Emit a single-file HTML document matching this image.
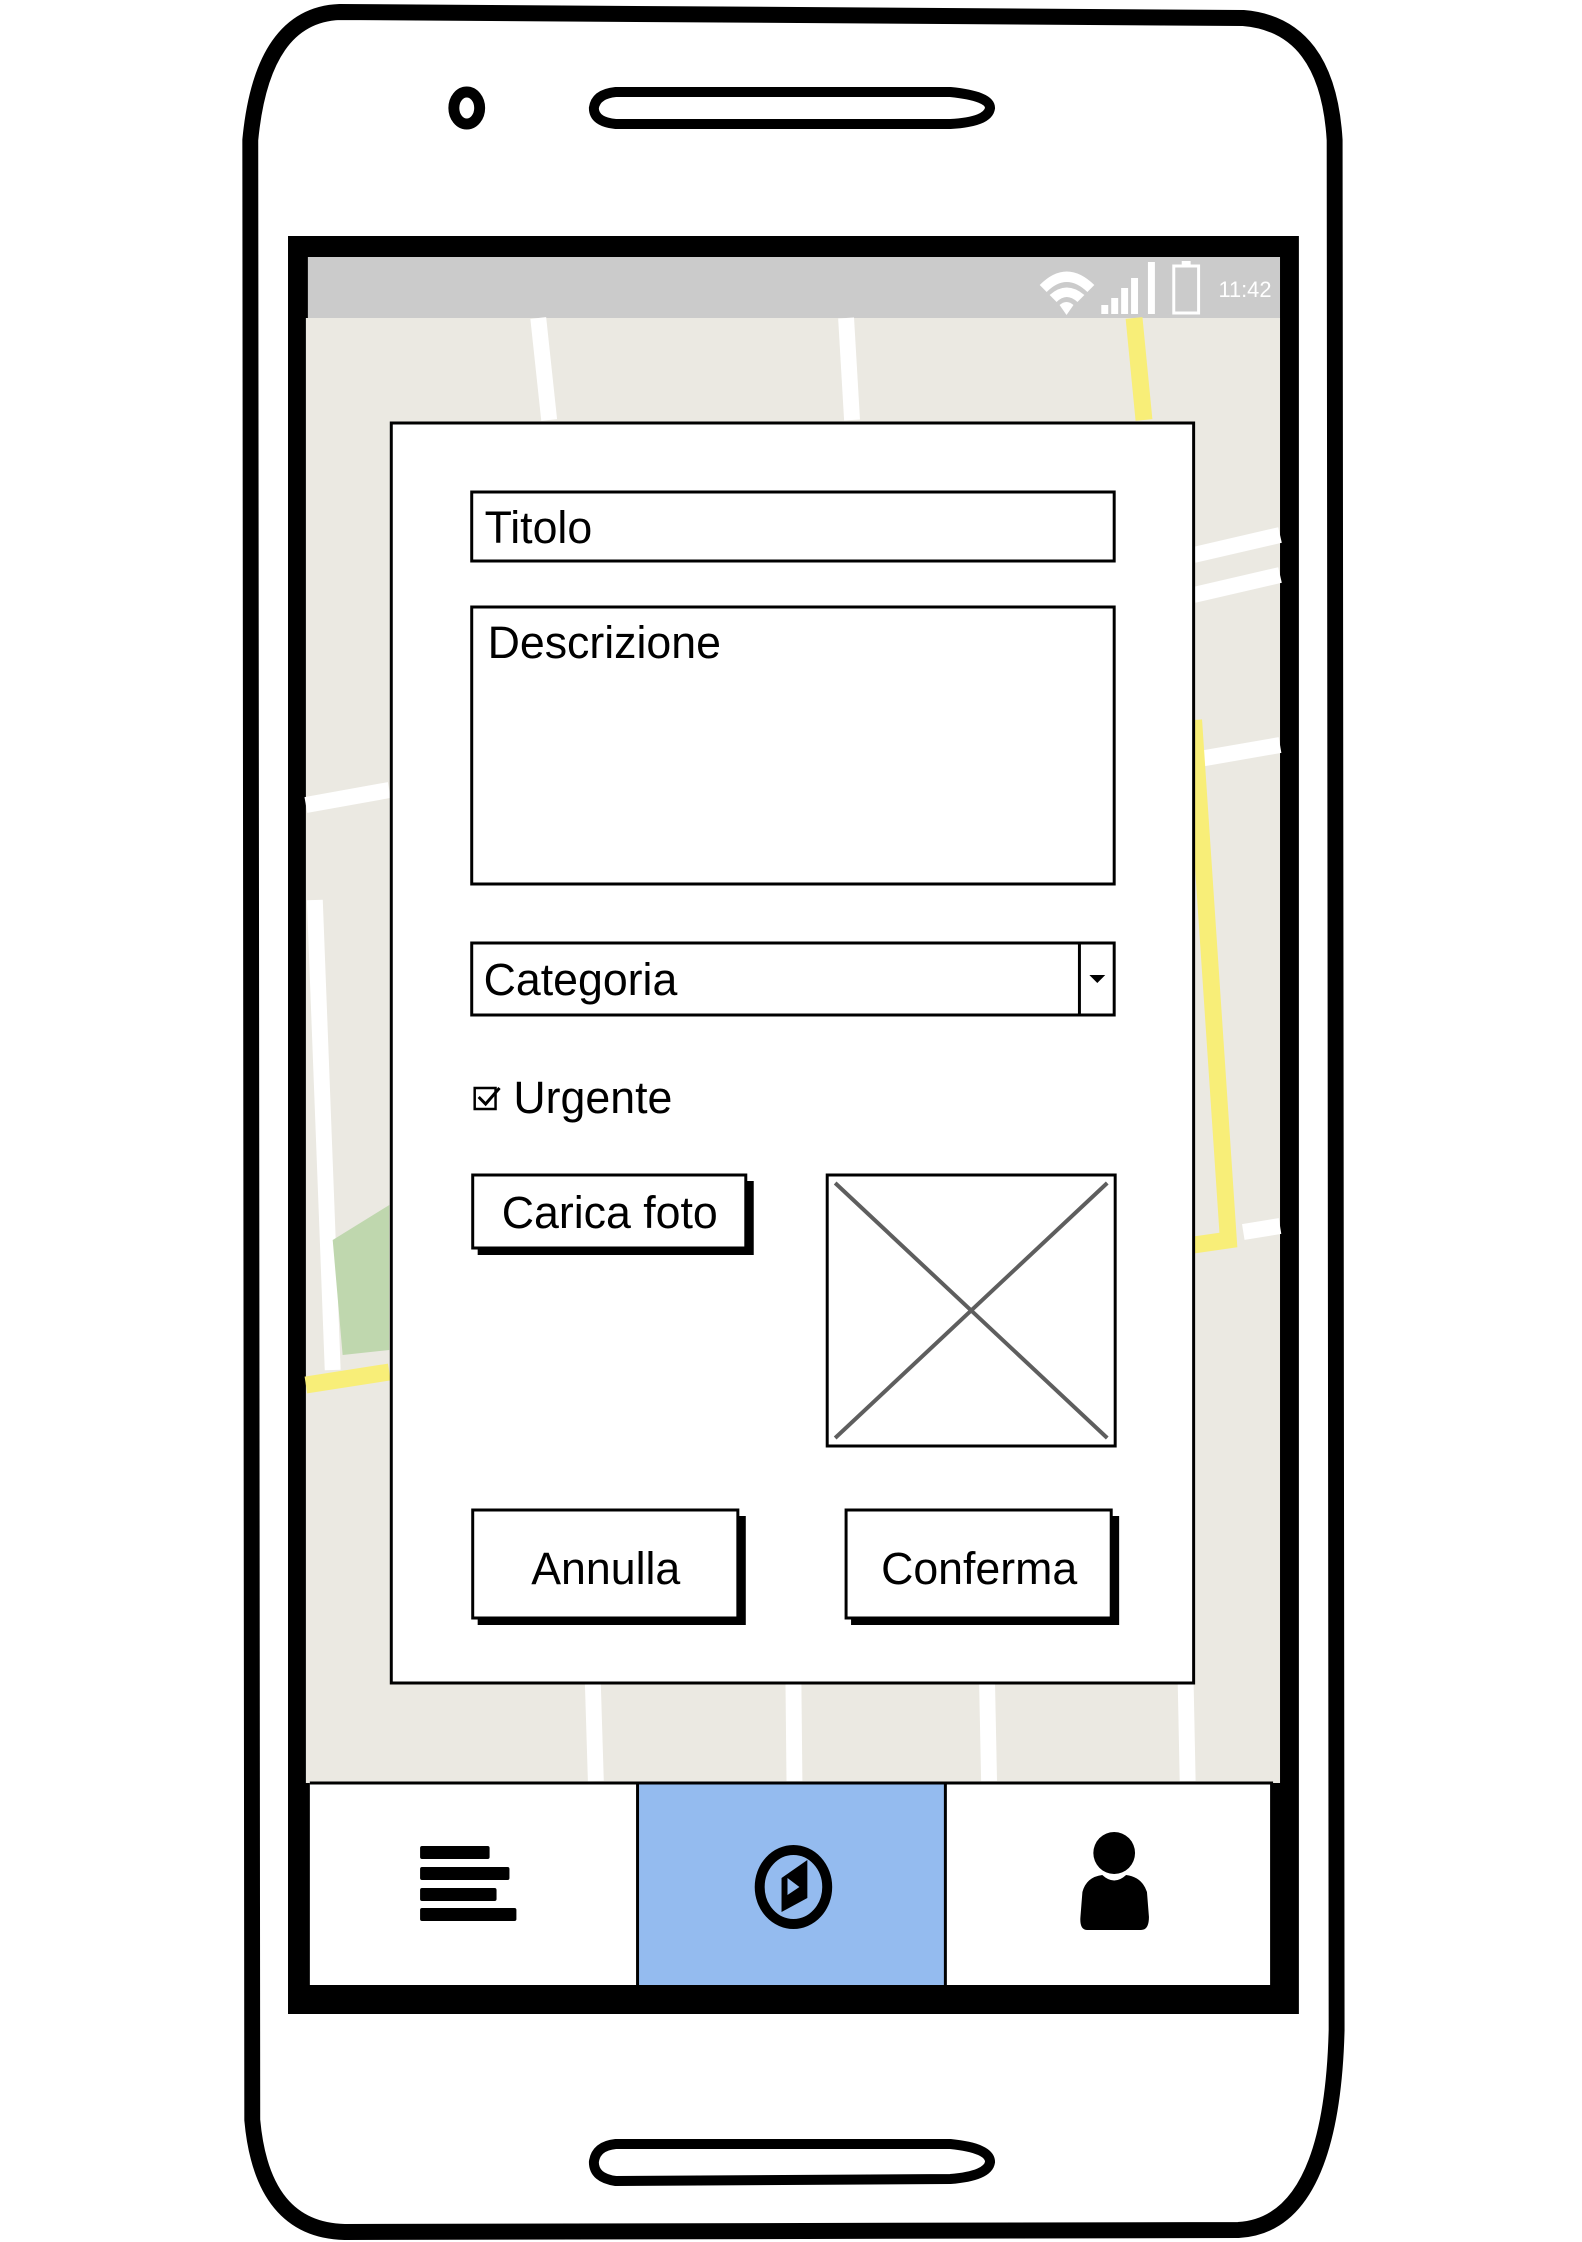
<!DOCTYPE html>
<html><head><meta charset="utf-8"><style>
html,body{margin:0;padding:0;background:#fff;width:1582px;height:2242px;overflow:hidden}
svg{position:absolute;left:0;top:0}
text{font-family:"Liberation Sans",sans-serif;fill:#000}
</style></head><body>
<svg width="1582" height="2242" viewBox="0 0 1582 2242">
<g transform="translate(290,0) scale(0.993,1) translate(-290,0)">
<path d="M340 12 L1250 18 Q1335 25 1342 140 L1344 2030 Q1339 2225 1245 2230 L345 2232 Q262 2230 252 2120 L250 140 Q262 15 340 12 Z" fill="#fff" stroke="#000" stroke-width="16"/>
<ellipse cx="468" cy="108" rx="13" ry="16" fill="none" stroke="#000" stroke-width="11"/>
<path d="M618 92 L955 92 Q995 96 995 108 Q993 122 955 124 L618 124 Q596 122 596 108 Q598 94 618 92 Z" fill="none" stroke="#000" stroke-width="10"/>
<path d="M618 2144 L955 2144 Q995 2148 995 2162 Q993 2176 955 2179 L618 2181 Q596 2178 596 2162 Q598 2146 618 2144 Z" fill="none" stroke="#000" stroke-width="10"/>
<rect x="288" y="236" width="1018" height="1778" fill="#000"/>
<rect x="308" y="257" width="979" height="61" fill="#cbcbcb"/>
<rect x="306" y="318" width="981" height="1465" fill="#ebe9e2"/>
<g stroke="#fff" stroke-width="16" fill="none">
<path d="M540 318 L551 420"/>
<path d="M850 318 L856 420"/>
<path d="M1200 555 L1287 535"/>
<path d="M1200 595 L1287 575"/>
<path d="M1200 760 L1287 745"/>
<path d="M306 805 L390 790"/>
<path d="M315 900 L333 1370"/>
<path d="M1250 1232 L1287 1226"/>
<path d="M595 1684 L598 1781"/>
<path d="M797 1684 L798 1781"/>
<path d="M992 1684 L994 1781"/>
<path d="M1192 1684 L1194 1781"/>
</g>
<path d="M333 1240 L390 1205 L390 1350 L343 1355 Z" fill="#bfd7ae"/>
<g stroke="#f8ee78" stroke-width="17" fill="none">
<path d="M1140 318 L1150 420"/>
<path d="M1200 720 L1235 1240 L1200 1245"/>
<path d="M306 1385 L390 1372"/>
</g>
<g fill="#fff">
<path d="M1045 285 Q1072 258 1100 285 L1093 292 Q1072 272 1052 292 Z"/>
<path d="M1055 295 Q1072 280 1090 295 L1083 302 Q1072 292 1062 302 Z"/>
<path d="M1065 305 Q1072 299 1079 305 L1072 315 Z"/>
<rect x="1107" y="305" width="7" height="9"/><rect x="1117" y="298" width="7" height="16"/><rect x="1127" y="288" width="7" height="26"/><rect x="1137" y="278" width="7" height="36"/><rect x="1154" y="262" width="7" height="52"/>
</g>
<rect x="1180" y="266" width="25" height="47" fill="none" stroke="#fff" stroke-width="3"/>
<rect x="1188" y="261" width="9" height="5" fill="#fff"/>
<text x="1225" y="297" font-size="22" style="fill:#fff">11:42</text>
<rect x="392" y="423" width="808" height="1260" fill="#fff" stroke="#000" stroke-width="3"/>
<rect x="473" y="492" width="647" height="69" fill="#fff" stroke="#000" stroke-width="3"/>
<text x="486" y="543" font-size="45">Titolo</text>
<rect x="473" y="607" width="647" height="277" fill="#fff" stroke="#000" stroke-width="3"/>
<text x="489" y="658" font-size="45">Descrizione</text>
<rect x="473" y="943" width="647" height="72" fill="#fff" stroke="#000" stroke-width="3"/>
<line x1="1085" y1="943" x2="1085" y2="1015" stroke="#000" stroke-width="3"/>
<path d="M1095 975 L1111 975 L1103 983 Z" fill="#000"/>
<text x="485" y="995" font-size="45">Categoria</text>
<rect x="476" y="1088" width="21" height="21" fill="none" stroke="#000" stroke-width="2.5"/>
<path d="M480 1097 L487 1104 L501 1088" fill="none" stroke="#000" stroke-width="3"/>
<text x="515" y="1113" font-size="45">Urgente</text>
<rect x="479" y="1181" width="278" height="74" fill="#000"/>
<rect x="474" y="1175" width="275" height="73" fill="#fff" stroke="#000" stroke-width="3"/>
<text x="612" y="1228" font-size="45" text-anchor="middle">Carica foto</text>
<rect x="831" y="1175" width="290" height="271" fill="#fff" stroke="#000" stroke-width="3"/>
<path d="M839 1183 L1113 1438 M1113 1183 L839 1438" stroke="#5e5e5e" stroke-width="4"/>
<rect x="479" y="1516" width="270" height="109" fill="#000"/>
<rect x="474" y="1510" width="267" height="108" fill="#fff" stroke="#000" stroke-width="3"/>
<text x="608" y="1584" font-size="45" text-anchor="middle">Annulla</text>
<rect x="855" y="1516" width="270" height="109" fill="#000"/>
<rect x="850" y="1510" width="267" height="108" fill="#fff" stroke="#000" stroke-width="3"/>
<text x="984" y="1584" font-size="45" text-anchor="middle">Conferma</text>
<rect x="310" y="1783" width="967" height="202" fill="#fff"/>
<rect x="640" y="1783" width="310" height="202" fill="#94bbef"/>
<path d="M310 1783 L1280 1783 M640 1783 L640 1985 M950 1783 L950 1985" stroke="#000" stroke-width="3"/>
<g fill="#000">
<rect x="421" y="1846" width="70" height="13" rx="2"/>
<rect x="421" y="1867" width="90" height="13" rx="2"/>
<rect x="421" y="1888" width="77" height="13" rx="2"/>
<rect x="421" y="1908" width="97" height="13" rx="2"/>
</g>
<ellipse cx="797" cy="1887" rx="34" ry="37" fill="none" stroke="#000" stroke-width="10"/>
<path d="M785 1878 L811 1860 L811 1898 L785 1912 Z" fill="#000"/>
<path d="M791 1878 L803 1887 L791 1895 Z" fill="#94bbef"/>
<circle cx="1120" cy="1853" r="21" fill="#000"/>
<path d="M1093 1930 Q1085 1930 1086 1917 L1088 1892 Q1092 1877 1108 1875 Q1120 1886 1132 1875 Q1148 1877 1153 1892 L1155 1917 Q1155 1930 1147 1930 Z" fill="#000"/>
</g>
</svg>
</body></html>
